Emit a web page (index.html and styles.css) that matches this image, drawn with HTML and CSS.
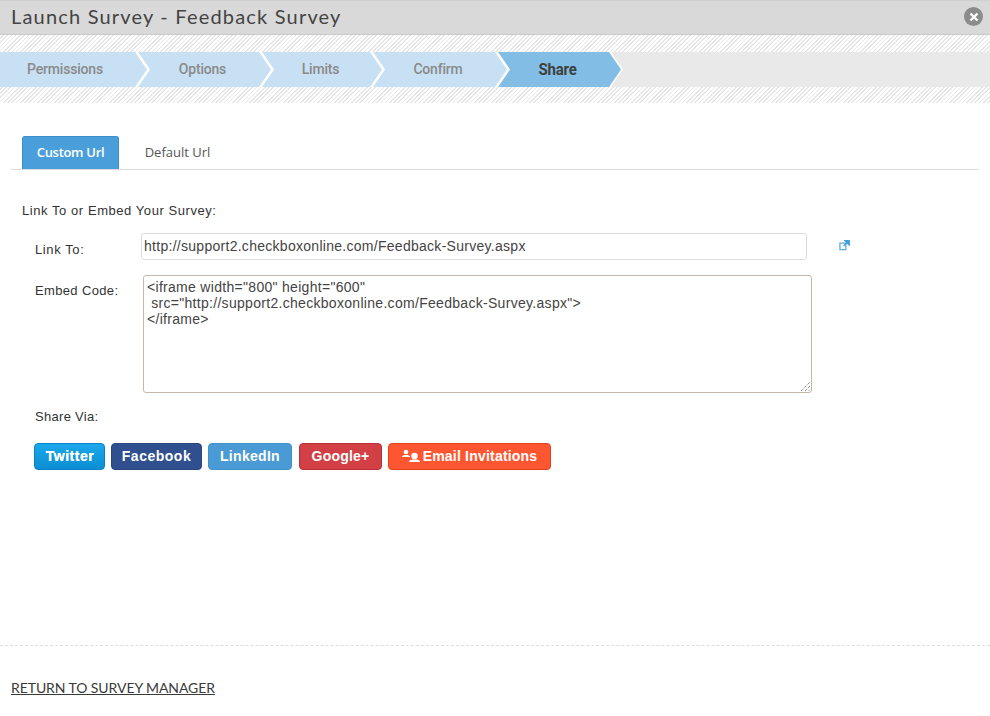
FILE: index.html
```html
<!DOCTYPE html>
<html lang="en">
<head>
<meta charset="utf-8">
<title>Launch Survey - Feedback Survey</title>
<link rel="stylesheet" href="styles.css">
</head>
<body>
<div class="dialog">
  <header class="titlebar">
    <h1 class="title">Launch Survey - Feedback Survey</h1>
    <button class="close" aria-label="Close">
      <svg width="10" height="10" viewBox="0 0 10 10"><path d="M1.500 1.500l7 7M8.500 1.500l-7 7" stroke="#fff" stroke-width="2.400" fill="none"/></svg>
    </button>
  </header>
  <div class="wizard">
    <nav class="steps">
      <div class="step s1"><span>Permissions</span></div>
      <div class="step s2"><span>Options</span></div>
      <div class="step s3"><span>Limits</span></div>
      <div class="step s4"><span>Confirm</span></div>
      <div class="step s5 active"><span>Share</span></div>
    </nav>
  </div>
  <main class="content">
    <div class="tabs">
      <a class="tab current">Custom Url</a>
      <a class="tab">Default Url</a>
    </div>
    <p class="intro">Link To or Embed Your Survey:</p>
    <div class="row link-row">
      <label class="label">Link To:</label>
      <div class="input">http://support2.checkboxonline.com/Feedback-Survey.aspx</div>
      <svg class="ext" width="11" height="11" viewBox="0 0 12 12"><path d="M1 3.500h6.500v7H1z" fill="#fff" stroke="#5aaee0" stroke-width="1.400"/><path d="M5 6.500L10 1.500M6.500 .8h4.700v4.700z" stroke="#3d9fdc" stroke-width="1.400" fill="#3d9fdc"/></svg>
    </div>
    <div class="row embed-row">
      <label class="label">Embed Code:</label>
      <div class="textarea">&lt;iframe width="800" height="600"<br>&nbsp;src="http://support2.checkboxonline.com/Feedback-Survey.aspx"&gt;<br>&lt;/iframe&gt;
        <svg class="grip" width="9" height="9" viewBox="0 0 9 9"><path d="M0 9L9 0M4 9L9 4M7.500 9L9 7.500" stroke="#666" stroke-width="1" stroke-dasharray="1 1" fill="none"/></svg>
      </div>
    </div>
    <p class="share-label">Share Via:</p>
    <div class="share">
      <a class="btn twitter">Twitter</a>
      <a class="btn facebook">Facebook</a>
      <a class="btn linkedin">LinkedIn</a>
      <a class="btn google">Google+</a>
      <a class="btn email"><svg width="18" height="13" viewBox="0 0 18 13"><circle cx="4" cy="3" r="2.300" fill="#fff"/><path d="M0 8c0-1.500 2-2 4-2s4 .5 4 2z" fill="#fff"/><circle cx="12.500" cy="7" r="3.200" fill="#fff"/><path d="M7 13c0-2 2.500-2.500 5.500-2.500s5.500 .5 5.500 2.500z" fill="#fff"/></svg>Email Invitations</a>
    </div>
  </main>
  <footer class="footer">
    <a class="return">RETURN TO SURVEY MANAGER</a>
  </footer>
</div>
</body>
</html>
```

FILE: styles.css
```css
* { box-sizing: border-box; }
html, body { margin: 0; padding: 0; }
body { background: #fff; font-family: "Liberation Sans", Arial, sans-serif; color: #333; }
.dialog { width: 990px; height: 716px; display: flex; flex-direction: column; overflow: hidden; }

.titlebar {
  height: 35px; flex: none; display: flex; align-items: center; justify-content: space-between;
  padding: 0 7px 0 11px;
  background: #d9d9d9; border-top: 1px solid #cfcfcf; border-bottom: 1px solid #c9c9c9;
}
.title { margin: 0 0 3px; font: 400 20px/1 Lato, sans-serif; letter-spacing: 1.19px; color: #444; }
.close {
  width: 19px; height: 19px; border: 0; padding: 0; border-radius: 50%; background: #8c8c8c;
  display: flex; align-items: center; justify-content: center; margin-bottom: 2px;
}

.wizard {
  height: 68px; flex: none; padding-top: 17px;
  background: repeating-linear-gradient(135deg, #fff 0, #fff 1.8px, #e6e6e6 1.8px, #e6e6e6 3px);
}
.steps { height: 35px; display: flex; background: #e9e9e9; }
.step {
  position: relative; height: 35px; margin-right: -12px; background: #fff;
  display: flex; align-items: center; justify-content: center; padding-bottom: 3px;
  font: 500 14px/1 Roboto, sans-serif; letter-spacing: -.2px; color: #8a8a8a;
  clip-path: polygon(0 0, calc(100% - 12px) 0, 100% 50%, calc(100% - 12px) 100%, 0 100%);
}
.step::before {
  content: ""; position: absolute; inset: 0 3px 0 0; background: #c8e0f3;
  clip-path: polygon(0 0, calc(100% - 12px) 0, 100% 50%, calc(100% - 12px) 100%, 0 100%);
}
.step span { position: relative; transform: scaleY(1.1); }
.s1 { width: 150px; z-index: 5; padding-right: 20px; }
.s2 { width: 136px; z-index: 4; padding-right: 7px; }
.s3 { width: 123px; z-index: 3; padding-right: 6px; }
.s4 { width: 137px; z-index: 2; padding-right: 7px; }
.s5 { width: 125px; z-index: 1; padding: 1px 6px 0 0; color: #3f3f3f; font-size: 15px; font-weight: 700; }
.s5::before { background: #81bde4; inset: 0 2px 0 0; }

.content { flex: 1; padding: 33px 11px 0; }
.tabs { display: flex; height: 34px; border-bottom: 1px solid #ddd; padding-left: 11px; }
.tab { width: 97px; height: 33px; display: flex; align-items: center; justify-content: center; font: 400 13px/1 "Open Sans", sans-serif; color: #555; }
.tab + .tab { width: 117px; padding-right: 0; }
.tab.current { background: #4a9fda; border: 1px solid #3a8fce; border-bottom: 0; border-radius: 3px 3px 0 0; color: #fff; font-weight: 600; letter-spacing: -.3px; padding-bottom: 2px; }

.intro { margin: 33px 0 0 11px; font-size: 13px; line-height: 15px; letter-spacing: .56px; }
.row { display: flex; align-items: flex-start; }
.label { width: 108px; margin-left: 24px; font-size: 13px; line-height: 15px; letter-spacing: .35px; padding-top: 9px; flex: none; }
.link-row { margin-top: 15px; height: 27px; }
.link-row .label { width: 106px; letter-spacing: .6px; }
.input {
  width: 666px; height: 27px; border: 1px solid #ddd; border-radius: 3px;
  padding: 0 2px; font-size: 14px; line-height: 24px; letter-spacing: .28px; color: #444;
}
.ext { margin: 7px 0 0 32px; }
.embed-row { margin-top: 15px; }
.embed-row .label { padding-top: 8px; }
.textarea {
  position: relative; width: 669px; height: 118px; border: 1px solid #c4b8ac; border-radius: 3px;
  padding: 3px 3px; font-size: 14px; line-height: 16px; letter-spacing: .3px; color: #444;
}
.grip { position: absolute; right: 1px; bottom: 1px; }
.share-label { margin: 16px 0 0 24px; font-size: 13px; line-height: 15px; letter-spacing: .3px; }
.share { display: flex; gap: 6px; margin: 19px 0 0 23px; }
.btn {
  height: 27px; display: flex; align-items: center; justify-content: center; border-radius: 4px;
  font: 700 14px/1 "Liberation Sans", sans-serif; letter-spacing: .5px; color: #fff; border: 1px solid; padding-bottom: 2px;
}
.twitter { width: 71px; background: linear-gradient(#1ba8ea, #0b8ed3); border-color: #0a80c6; padding-left: 1px; text-shadow: 0 0 .6px #fff; }
.facebook { width: 91px; background: #2f4f8f; border-color: #2a4680; }
.linkedin { width: 84px; background: #4a9ad6; border-color: #4390cb; margin-right: 1px; letter-spacing: .3px; }
.google { width: 83px; background: #d24046; border-color: #bb2f36; letter-spacing: .2px; }
.email { width: 163px; background: #ff5632; border-color: #e0421f; gap: 3px; letter-spacing: .2px; }

.footer { height: 71px; flex: none; border-top: 1px dashed #ddd; padding: 33px 0 0 11px; }
.return { font: 400 14px/16px Lato, sans-serif; letter-spacing: -.08px; color: #3a3a3a; text-decoration: underline; }
```
